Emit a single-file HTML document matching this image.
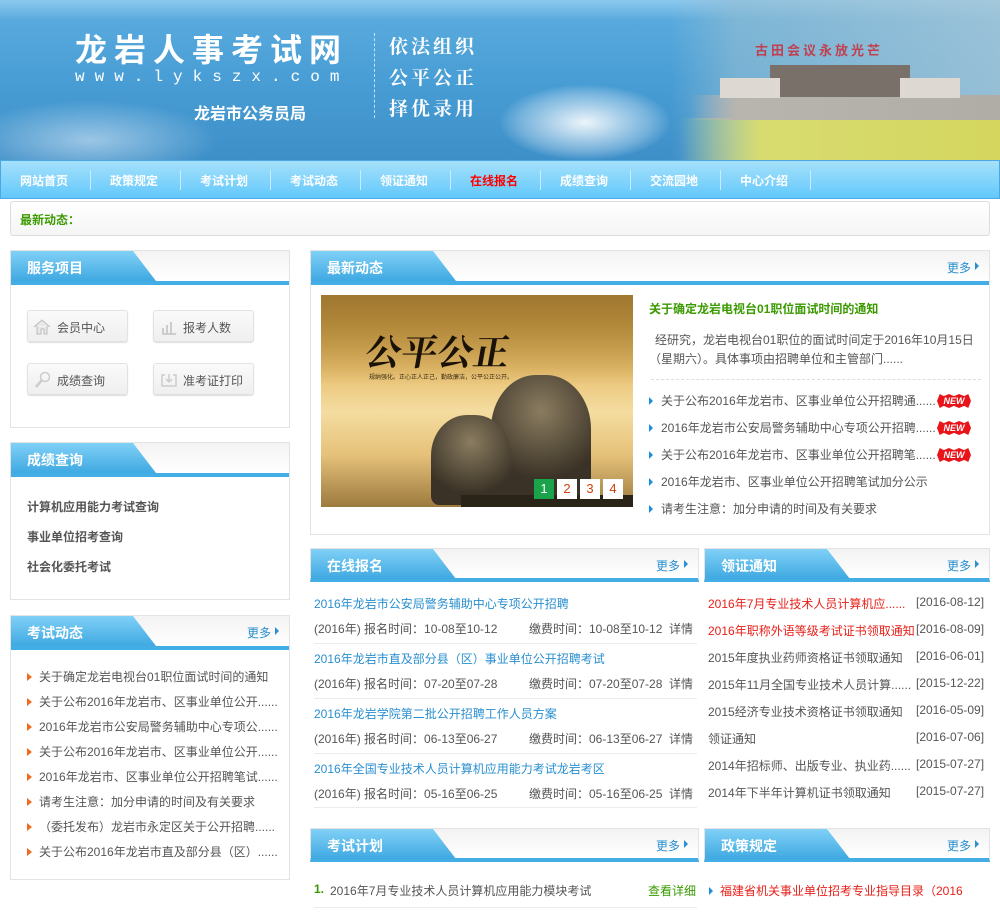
<!DOCTYPE html>
<html><head><meta charset="utf-8">
<style>
*{margin:0;padding:0;box-sizing:border-box}
body{width:1000px;height:909px;overflow:hidden;background:#fff;font-family:"Liberation Sans","Noto Sans CJK SC",sans-serif;font-size:12px;color:#555;position:relative}
.a{position:absolute}
#hdr{left:0;top:0;width:1000px;height:160px;background:linear-gradient(180deg,#5eaee0 0%,#4a9fd6 45%,#3d8fc8 100%);overflow:hidden}
#nav{left:0;top:160px;width:1000px;height:39px;background:linear-gradient(#a6e1fb,#62c8fb);border:1px solid #4aa8e4}
#nav span{position:absolute;top:11px;font-size:12px;font-weight:bold;color:#fff}
#nav i{position:absolute;top:9px;width:1px;height:20px;background:#c8ecfd}
.bx{position:absolute;border:1px solid #e3e3e3;background:#fff}
.hd{position:relative;height:34px;background:linear-gradient(#f3f3f3,#fff);border-bottom:4px solid #43ade5}
.tab{position:absolute;left:0;top:0;width:150px;height:30px;background:linear-gradient(#80d0f6,#3fa9e2);clip-path:polygon(0 0,122px 0,145px 100%,0 100%)}
.hd b{position:absolute;left:16px;top:7px;color:#fff;font-size:14px}
.more{position:absolute;right:18px;top:8px;color:#2a8fd0;font-size:12px}
.more:after{content:"";position:absolute;right:-8px;top:3px;border-left:4px solid #2a8fd0;border-top:4px solid transparent;border-bottom:4px solid transparent}
.li{position:absolute;white-space:nowrap}
.tri{position:absolute;width:0;height:0;border-left:5px solid #ee6a1e;border-top:4px solid transparent;border-bottom:4px solid transparent}
.btri{position:absolute;width:0;height:0;border-left:4px solid #1b8ee0;border-top:4px solid transparent;border-bottom:4px solid transparent}
.btn{position:absolute;width:101px;height:32px;border:1px solid #e2e2e2;border-radius:3px;background:linear-gradient(#fafafa,#efefef);box-shadow:0 1px 1px #ddd}
.btn span{position:absolute;left:29px;top:8px;font-size:12px;color:#555}
.new{position:absolute;width:34px;height:14px;background:#e8141a;color:#fff;font-size:9px;font-weight:bold;font-style:italic;text-align:center;line-height:14px;clip-path:polygon(0 50%,8% 0,20% 15%,35% 0,50% 15%,65% 0,80% 15%,92% 0,100% 50%,92% 100%,80% 85%,65% 100%,50% 85%,35% 100%,20% 85%,8% 100%)}
.sep{position:absolute;height:1px;background:#ececec}
</style></head><body>

<div id="hdr" class="a">
 <div class="a" style="left:0;top:0;width:1000px;height:20px;background:linear-gradient(#8bc8ee,rgba(90,170,225,0))"></div>
 <div class="a" style="left:-40px;top:100px;width:260px;height:80px;border-radius:50%;background:radial-gradient(rgba(230,240,250,.55),rgba(200,225,245,0) 70%)"></div>
 <div class="a" style="left:500px;top:85px;width:170px;height:75px;border-radius:50%;background:radial-gradient(rgba(255,255,255,.9),rgba(230,240,250,.3) 55%,rgba(200,225,245,0) 72%)"></div>
 <div class="a" style="left:670px;top:0;width:330px;height:160px;background:linear-gradient(90deg,rgba(120,180,220,0),rgba(150,190,210,.6) 20%,rgba(170,200,215,.8))"></div>
 <div class="a" style="left:680px;top:118px;width:320px;height:42px;background:linear-gradient(90deg,rgba(200,210,110,0),#d8dc70 25%,#d4d65e)"></div>
 <div class="a" style="left:690px;top:95px;width:310px;height:25px;background:linear-gradient(90deg,rgba(200,200,200,0),#b8b4ae 15%,#b0aca6)"></div>
 <div class="a" style="left:770px;top:65px;width:140px;height:32px;background:#7a706a"></div>
 <div class="a" style="left:720px;top:78px;width:60px;height:20px;background:#ddd8d2"></div>
 <div class="a" style="left:900px;top:78px;width:60px;height:20px;background:#ddd8d2"></div>
 <div class="a" style="left:755px;top:40px;color:#c04050;font-size:13px;font-weight:bold;letter-spacing:3px">古田会议永放光芒</div>
 <div class="a" style="left:75px;top:32px;color:#fff;font-size:32px;line-height:36px;font-weight:bold;letter-spacing:7px">龙岩人事考试网</div>
 <div class="a" style="left:75px;top:68px;color:#fff;font-size:16px;line-height:18px;letter-spacing:10px;font-family:'Liberation Mono',monospace">www.lykszx.com</div>
 <div class="a" style="left:194px;top:100px;color:#fff;font-size:16px;font-weight:bold">龙岩市公务员局</div>
 <div class="a" style="left:374px;top:33px;width:1px;height:85px;border-left:1px dashed rgba(255,255,255,.7)"></div>
 <div class="a" style="left:389px;top:30px;color:#fff;font-size:19px;font-weight:bold;line-height:31px;letter-spacing:3px;font-family:'Noto Serif CJK SC',serif">依法组织<br>公平公正<br>择优录用</div>
</div>

<div id="nav" class="a">
 <span style="left:19px">网站首页</span><i style="left:89px"></i>
 <span style="left:109px">政策规定</span><i style="left:179px"></i>
 <span style="left:199px">考试计划</span><i style="left:269px"></i>
 <span style="left:289px">考试动态</span><i style="left:359px"></i>
 <span style="left:379px">领证通知</span><i style="left:449px"></i>
 <span style="left:469px;color:#f00">在线报名</span><i style="left:539px"></i>
 <span style="left:559px">成绩查询</span><i style="left:629px"></i>
 <span style="left:649px">交流园地</span><i style="left:719px"></i>
 <span style="left:739px">中心介绍</span><i style="left:809px"></i>
</div>

<div class="a" style="left:10px;top:201px;width:980px;height:35px;border:1px solid #ddd;border-radius:3px;background:linear-gradient(#fff,#f5f5f5)">
 <b class="a" style="left:9px;top:9px;color:#3a9a00;font-size:12px">最新动态：</b>
</div>

<!-- 服务项目 -->
<div class="bx" style="left:10px;top:250px;width:280px;height:178px">
 <div class="hd"><div class="tab"></div><b>服务项目</b></div>
 <div class="btn" style="left:16px;top:59px"><svg class="a" style="left:5px;top:8px" width="18" height="16"><path d="M1 8 L9 1 L17 8 M4 7 V15 H8 V10 H11 V15 H14 V7" fill="#e8e8e8" stroke="#bbb"/></svg><span>会员中心</span></div>
 <div class="btn" style="left:142px;top:59px"><svg class="a" style="left:7px;top:8px" width="16" height="16"><path d="M2 14V9M6 14V6M10 14V3M1 15H15" stroke="#ccc" stroke-width="2" fill="none"/></svg><span>报考人数</span></div>
 <div class="btn" style="left:16px;top:112px"><svg class="a" style="left:6px;top:7px" width="18" height="18"><circle cx="11" cy="6" r="4.5" fill="none" stroke="#ccc" stroke-width="1.5"/><path d="M8 9 L2 16" stroke="#ccc" stroke-width="2.5"/></svg><span>成绩查询</span></div>
 <div class="btn" style="left:142px;top:112px"><svg class="a" style="left:6px;top:8px" width="18" height="16"><path d="M5 3H2V14H16V3H13M9 2V10M6 7L9 10L12 7" fill="none" stroke="#ccc" stroke-width="1.5"/></svg><span>准考证打印</span></div>
</div>

<!-- 成绩查询 -->
<div class="bx" style="left:10px;top:442px;width:280px;height:158px">
 <div class="hd"><div class="tab"></div><b>成绩查询</b></div>
 <b class="li" style="left:16px;top:55px;color:#555;font-size:12px">计算机应用能力考试查询</b>
 <b class="li" style="left:16px;top:85px;color:#555;font-size:12px">事业单位招考查询</b>
 <b class="li" style="left:16px;top:115px;color:#555;font-size:12px">社会化委托考试</b>
</div>

<!-- 考试动态 -->
<div class="bx" style="left:10px;top:615px;width:280px;height:265px">
 <div class="hd"><div class="tab"></div><b>考试动态</b><span class="more">更多</span></div>
 <i class="tri" style="left:16px;top:57px"></i><div class="li" style="left:28px;top:52px">关于确定龙岩电视台01职位面试时间的通知</div>
 <i class="tri" style="left:16px;top:82px"></i><div class="li" style="left:28px;top:77px">关于公布2016年龙岩市、区事业单位公开......</div>
 <i class="tri" style="left:16px;top:107px"></i><div class="li" style="left:28px;top:102px">2016年龙岩市公安局警务辅助中心专项公......</div>
 <i class="tri" style="left:16px;top:132px"></i><div class="li" style="left:28px;top:127px">关于公布2016年龙岩市、区事业单位公开......</div>
 <i class="tri" style="left:16px;top:157px"></i><div class="li" style="left:28px;top:152px">2016年龙岩市、区事业单位公开招聘笔试......</div>
 <i class="tri" style="left:16px;top:182px"></i><div class="li" style="left:28px;top:177px">请考生注意：加分申请的时间及有关要求</div>
 <i class="tri" style="left:16px;top:207px"></i><div class="li" style="left:28px;top:202px">（委托发布）龙岩市永定区关于公开招聘......</div>
 <i class="tri" style="left:16px;top:232px"></i><div class="li" style="left:28px;top:227px">关于公布2016年龙岩市直及部分县（区）......</div>
</div>

<!-- 最新动态 -->
<div class="bx" style="left:310px;top:250px;width:680px;height:285px">
 <div class="hd"><div class="tab"></div><b>最新动态</b><span class="more">更多</span></div>
 <div class="a" style="left:10px;top:44px;width:312px;height:212px;overflow:hidden;background:linear-gradient(180deg,#c89a3a 0%,#e8c070 35%,#f4dca0 55%,#e6c27a 75%,#9c7a3e 100%)">
  <div class="a" style="left:0;top:0;width:312px;height:90px;background:linear-gradient(#a07830,rgba(230,190,110,0))"></div>
  <div class="a" style="left:45px;top:30px;color:#1a1208;font-size:36px;font-weight:bold;font-family:'Noto Serif CJK SC',serif;transform:skewX(-10deg)">公平公正</div>
  <div class="a" style="left:48px;top:77px;color:#3a2a10;font-size:6px">规纳强化。正心正人正己，勤政廉洁，公平公正公开。</div>
  <div class="a" style="left:170px;top:80px;width:100px;height:120px;border-radius:45% 45% 10% 10%;background:radial-gradient(circle at 50% 30%,#8a7c60,#3a3226 70%)"></div>
  <div class="a" style="left:110px;top:120px;width:80px;height:90px;border-radius:45% 45% 10% 10%;background:radial-gradient(circle at 50% 30%,#8a7c60,#3a3226 70%)"></div>
  <div class="a" style="left:140px;top:200px;width:172px;height:12px;background:#2a2418"></div>
  <div class="a" style="left:213px;top:184px;width:20px;height:20px;background:#1aa34a;color:#fff;font-size:13px;text-align:center;line-height:20px">1</div>
  <div class="a" style="left:236px;top:184px;width:20px;height:20px;background:#fff;color:#d04010;font-size:13px;text-align:center;line-height:20px">2</div>
  <div class="a" style="left:259px;top:184px;width:20px;height:20px;background:#fff;color:#d04010;font-size:13px;text-align:center;line-height:20px">3</div>
  <div class="a" style="left:282px;top:184px;width:20px;height:20px;background:#fff;color:#d04010;font-size:13px;text-align:center;line-height:20px">4</div>
 </div>
 <b class="li" style="left:338px;top:49px;color:#3a9a00;font-size:12px">关于确定龙岩电视台01职位面试时间的通知</b>
 <div class="a" style="left:338px;top:80px;width:332px;line-height:19px;text-indent:6px">经研究，龙岩电视台01职位的面试时间定于2016年10月15日（星期六）。具体事项由招聘单位和主管部门......</div>
 <div class="a" style="left:340px;top:128px;width:330px;border-top:1px dashed #ddd"></div>
 <i class="btri" style="left:338px;top:146px"></i><div class="li" style="left:350px;top:141px">关于公布2016年龙岩市、区事业单位公开招聘通......</div><div class="new" style="left:626px;top:143px">NEW</div>
 <i class="btri" style="left:338px;top:173px"></i><div class="li" style="left:350px;top:168px">2016年龙岩市公安局警务辅助中心专项公开招聘......</div><div class="new" style="left:626px;top:170px">NEW</div>
 <i class="btri" style="left:338px;top:200px"></i><div class="li" style="left:350px;top:195px">关于公布2016年龙岩市、区事业单位公开招聘笔......</div><div class="new" style="left:626px;top:197px">NEW</div>
 <i class="btri" style="left:338px;top:227px"></i><div class="li" style="left:350px;top:222px">2016年龙岩市、区事业单位公开招聘笔试加分公示</div>
 <i class="btri" style="left:338px;top:254px"></i><div class="li" style="left:350px;top:249px">请考生注意：加分申请的时间及有关要求</div>
</div>

<!-- 在线报名 -->
<div class="a" style="left:310px;top:548px;width:389px;height:262px">
 <div class="hd" style="border:1px solid #e3e3e3;border-bottom:4px solid #43ade5"><div class="tab"></div><b>在线报名</b><span class="more">更多</span></div>
 <div class="li" style="left:4px;top:47px;color:#2a8fd0">2016年龙岩市公安局警务辅助中心专项公开招聘</div>
 <div class="li" style="left:4px;top:72px">(2016年) 报名时间：10-08至10-12</div><div class="li" style="left:219px;top:72px">缴费时间：10-08至10-12&nbsp; 详情</div>
 <div class="sep" style="left:4px;top:95px;width:383px"></div>
 <div class="li" style="left:4px;top:102px;color:#2a8fd0">2016年龙岩市直及部分县（区）事业单位公开招聘考试</div>
 <div class="li" style="left:4px;top:127px">(2016年) 报名时间：07-20至07-28</div><div class="li" style="left:219px;top:127px">缴费时间：07-20至07-28&nbsp; 详情</div>
 <div class="sep" style="left:4px;top:150px;width:383px"></div>
 <div class="li" style="left:4px;top:157px;color:#2a8fd0">2016年龙岩学院第二批公开招聘工作人员方案</div>
 <div class="li" style="left:4px;top:182px">(2016年) 报名时间：06-13至06-27</div><div class="li" style="left:219px;top:182px">缴费时间：06-13至06-27&nbsp; 详情</div>
 <div class="sep" style="left:4px;top:205px;width:383px"></div>
 <div class="li" style="left:4px;top:212px;color:#2a8fd0">2016年全国专业技术人员计算机应用能力考试龙岩考区</div>
 <div class="li" style="left:4px;top:237px">(2016年) 报名时间：05-16至06-25</div><div class="li" style="left:219px;top:237px">缴费时间：05-16至06-25&nbsp; 详情</div>
 <div class="sep" style="left:4px;top:259px;width:383px"></div>
</div>

<!-- 领证通知 -->
<div class="a" style="left:704px;top:548px;width:286px;height:262px">
 <div class="hd" style="border:1px solid #e3e3e3;border-bottom:4px solid #43ade5"><div class="tab"></div><b>领证通知</b><span class="more">更多</span></div>
 <div class="li" style="left:4px;top:47px;color:#e8201a">2016年7月专业技术人员计算机应......</div><div class="li" style="left:212px;top:47px">[2016-08-12]</div>
 <div class="li" style="left:4px;top:74px;color:#e8201a">2016年职称外语等级考试证书领取通知</div><div class="li" style="left:212px;top:74px">[2016-08-09]</div>
 <div class="li" style="left:4px;top:101px">2015年度执业药师资格证书领取通知</div><div class="li" style="left:212px;top:101px">[2016-06-01]</div>
 <div class="li" style="left:4px;top:128px">2015年11月全国专业技术人员计算......</div><div class="li" style="left:212px;top:128px">[2015-12-22]</div>
 <div class="li" style="left:4px;top:155px">2015经济专业技术资格证书领取通知</div><div class="li" style="left:212px;top:155px">[2016-05-09]</div>
 <div class="li" style="left:4px;top:182px">领证通知</div><div class="li" style="left:212px;top:182px">[2016-07-06]</div>
 <div class="li" style="left:4px;top:209px">2014年招标师、出版专业、执业药......</div><div class="li" style="left:212px;top:209px">[2015-07-27]</div>
 <div class="li" style="left:4px;top:236px">2014年下半年计算机证书领取通知</div><div class="li" style="left:212px;top:236px">[2015-07-27]</div>
</div>

<!-- 考试计划 -->
<div class="a" style="left:310px;top:828px;width:389px;height:90px">
 <div class="hd" style="border:1px solid #e3e3e3;border-bottom:4px solid #43ade5"><div class="tab"></div><b>考试计划</b><span class="more">更多</span></div>
 <b class="li" style="left:4px;top:54px;color:#3a9a00">1.</b><div class="li" style="left:20px;top:54px">2016年7月专业技术人员计算机应用能力模块考试</div>
 <div class="li" style="left:338px;top:54px;color:#3a9a00">查看详细</div>
 <div class="sep" style="left:4px;top:79px;width:383px"></div>
</div>

<!-- 政策规定 -->
<div class="a" style="left:704px;top:828px;width:286px;height:90px">
 <div class="hd" style="border:1px solid #e3e3e3;border-bottom:4px solid #43ade5"><div class="tab"></div><b>政策规定</b><span class="more">更多</span></div>
 <i class="btri" style="left:5px;top:59px"></i><div class="li" style="left:16px;top:54px;color:#e8201a">福建省机关事业单位招考专业指导目录（2016</div>
</div>

</body></html>
